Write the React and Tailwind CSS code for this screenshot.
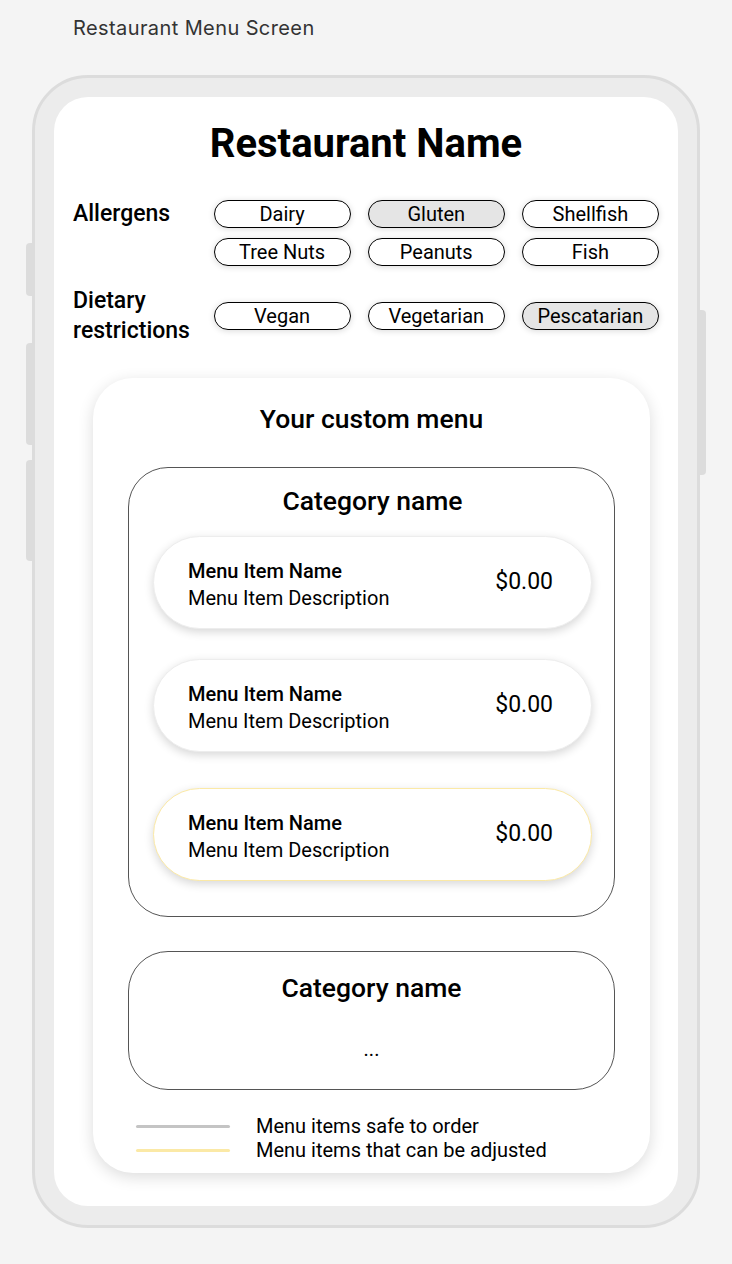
const allergens = [
  { label: "Dairy" },
  { label: "Gluten", active: true },
  { label: "Shellfish" },
  { label: "Tree Nuts" },
  { label: "Peanuts" },
  { label: "Fish" },
];

const dietary = [
  { label: "Vegan" },
  { label: "Vegetarian" },
  { label: "Pescatarian", active: true },
];

const items = [
  { name: "Menu Item Name", desc: "Menu Item Description", price: "$0.00", mt: "mt-[19px]" },
  { name: "Menu Item Name", desc: "Menu Item Description", price: "$0.00", mt: "mt-[30px]" },
  { name: "Menu Item Name", desc: "Menu Item Description", price: "$0.00", mt: "mt-[36px]", adjust: true },
];

function Chip({ label, active }) {
  return (
    <div
      className={`h-[28px] rounded-full border-[1.5px] border-black flex items-center justify-center text-[20px] leading-none text-black shadow-[0_1px_6px_rgba(0,0,0,0.15)] ${
        active ? "bg-[#e5e5e5]" : "bg-white"
      }`}
    >
      {label}
    </div>
  );
}

function MenuItem({ item }) {
  return (
    <div
      className={`${item.mt} h-[93px] rounded-full bg-white flex items-center justify-between pl-[34px] pr-[38px] shadow-[0_3px_10px_rgba(0,0,0,0.16)] border ${
        item.adjust ? "border-[#fbe9a6]" : "border-[#ededed]"
      }`}
    >
      <div className="flex flex-col mt-[5px]">
        <span className="text-[20px] font-medium leading-[27px] text-black">{item.name}</span>
        <span className="text-[20px] leading-[27px] text-black">{item.desc}</span>
      </div>
      <span className="text-[23px] text-black">{item.price}</span>
    </div>
  );
}

export default function App() {
  return (
    <div className="w-[732px] h-[1264px] bg-[#f4f4f4] font-['Roboto',sans-serif] overflow-hidden">
      <div className="pl-[73px] pt-[13px] h-[75px] font-['Inter',sans-serif] text-[20px] tracking-[0.4px] text-[#333]">
        Restaurant Menu Screen
      </div>

      <div className="relative ml-[32px] w-[668px] h-[1153px] rounded-[56px] border-[3px] border-[#dcdcdc] bg-[#ececec] p-[19px]">
        {/* side buttons */}
        <div className="absolute left-[-9px] top-[165px] w-[6px] h-[53px] rounded-l bg-[#dcdcdc]" />
        <div className="absolute left-[-9px] top-[265px] w-[6px] h-[102px] rounded-l bg-[#dcdcdc]" />
        <div className="absolute left-[-9px] top-[382px] w-[6px] h-[101px] rounded-l bg-[#dcdcdc]" />
        <div className="absolute right-[-9px] top-[232px] w-[6px] h-[165px] rounded-r bg-[#dcdcdc]" />

        <div className="w-full h-full rounded-[34px] bg-white flex flex-col">
          <h1 className="pt-[24px] text-center text-[40px] font-bold leading-[46px] text-black">
            Restaurant Name
          </h1>

          <div className="mt-[33px] flex items-start px-[19px]">
            <div className="w-[141px] text-[23px] font-medium leading-[28px] text-black">Allergens</div>
            <div className="grid grid-cols-3 gap-x-[17px] gap-y-[10px] w-[447px]">
              {allergens.map((a) => (
                <Chip key={a.label} {...a} />
              ))}
            </div>
          </div>

          <div className="mt-[20px] flex items-center px-[19px]">
            <div className="w-[141px] text-[23px] font-medium leading-[30px] text-black">
              Dietary
              <br />
              restrictions
            </div>
            <div className="grid grid-cols-3 gap-x-[17px] w-[447px]">
              {dietary.map((d) => (
                <Chip key={d.label} {...d} />
              ))}
            </div>
          </div>

          <div className="mt-[32px] ml-[39px] w-[557px] rounded-[40px] bg-white shadow-[0_4px_16px_rgba(0,0,0,0.14)] px-[35px] pt-[25px] pb-[11px]">
            <h2 className="text-center text-[26.5px] font-medium leading-[32px] text-black">Your custom menu</h2>

            <div className="mt-[32px] rounded-[40px] border-[1.5px] border-[#555] pl-[24px] pr-[22px] pt-[17px] pb-[35px]">
              <h3 className="text-center text-[26.5px] font-medium leading-[32px] text-black">Category name</h3>
              {items.map((it, i) => (
                <MenuItem key={i} item={it} />
              ))}
            </div>

            <div className="mt-[34px] h-[139px] rounded-[40px] border-[1.5px] border-[#555] pt-[20px] flex flex-col items-center">
              <h3 className="text-[26.5px] font-medium leading-[32px] text-black">Category name</h3>
              <span className="mt-[30px] text-[20px] text-black">...</span>
            </div>

            <div className="mt-[24px] flex flex-col pl-[8px]">
              <div className="flex items-center">
                <span className="w-[94px] h-[3px] rounded bg-[#c4c4c4]" />
                <span className="ml-[26px] text-[20px] leading-[24px] text-black">Menu items safe to order</span>
              </div>
              <div className="flex items-center">
                <span className="w-[94px] h-[3px] rounded bg-[#fbe9a6]" />
                <span className="ml-[26px] text-[20px] leading-[24px] text-black">Menu items that can be adjusted</span>
              </div>
            </div>
          </div>
        </div>
      </div>
    </div>
  );
}
